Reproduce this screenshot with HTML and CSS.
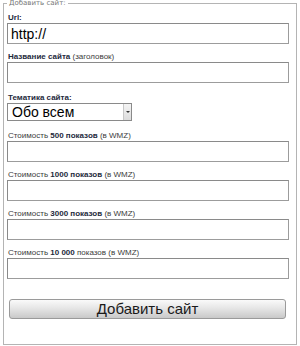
FILE: index.html
```html
<!DOCTYPE html>
<html lang="ru">
<head>
    <meta charset="UTF-8">
    <title>Добавить сайт</title>
    <link rel="stylesheet" href="styles.css">
</head>
<body>
    <form class="add-site">
        <fieldset>
            <legend>Добавить сайт:</legend>

            <div class="field">
                <label for="url"><b>Url:</b></label>
                <input type="text" id="url" value="http://">
            </div>

            <div class="field">
                <label for="title"><b>Название сайта</b> (заголовок)</label>
                <input type="text" id="title">
            </div>

            <div class="field field-select">
                <label for="topic"><b>Тематика сайта:</b></label>
                <div class="select" id="topic">
                    <span class="select-value">Обо всем</span>
                    <span class="select-arrow"></span>
                </div>
            </div>

            <div class="field">
                <label for="p500">Стоимость <b>500 показов</b> (в WMZ)</label>
                <input type="text" id="p500">
            </div>

            <div class="field">
                <label for="p1000">Стоимость <b>1000 показов</b> (в WMZ)</label>
                <input type="text" id="p1000">
            </div>

            <div class="field">
                <label for="p3000">Стоимость <b>3000 показов</b> (в WMZ)</label>
                <input type="text" id="p3000">
            </div>

            <div class="field">
                <label for="p10000">Стоимость <b>10 000</b> показов (в WMZ)</label>
                <input type="text" id="p10000">
            </div>

            <button type="button" class="submit">Добавить сайт</button>
        </fieldset>
    </form>
</body>
</html>
```

FILE: styles.css
```css
* {
    margin: 0;
    padding: 0;
    box-sizing: border-box;
}

body {
    background: #fff;
    font-family: "DejaVu Sans", Verdana, sans-serif;
    color: #333;
}

fieldset {
    margin: 0 3px 0 3px;
    height: 345px;
    border: 1px solid #b4b4b4;
    padding: 6px 7px 0 3px;
    display: flex;
    flex-direction: column;
    gap: 8px;
}

legend {
    padding: 0 2px;
    font-size: 7px;
    line-height: 7px;
    color: #777;
}

.field {
    display: flex;
    flex-direction: column;
}

.field-select {
    margin: 2px 0 2px;
}

label {
    font-family: "Liberation Sans", Arial, sans-serif;
    font-size: 8px;
    line-height: 10px;
    padding-left: 1px;
    color: #3c3c3c;
}

label b {
    color: #1e2a3c;
}

input {
    height: 21px;
    width: 100%;
    border: 1px solid #9c9c9c;
    border-top-color: #8a8a8a;
    border-left-color: #8a8a8a;
    padding: 0 3px;
    font-family: "Liberation Sans", Arial, sans-serif;
    font-size: 14px;
    color: #000;
    background: #fff;
}

.select {
    display: flex;
    width: 125px;
    height: 18px;
    border: 1px solid #8a8a8a;
    background: #fff;
}

.select-value {
    flex: 1;
    padding-left: 4px;
    font-family: "Liberation Sans", Arial, sans-serif;
    font-size: 14px;
    line-height: 16px;
    color: #000;
}

.select-arrow {
    width: 8px;
    border-left: 1px solid #c8c8c8;
    background: linear-gradient(#f4f4f4, #dcdcdc);
    display: flex;
    align-items: center;
    justify-content: center;
}

.select-arrow::after {
    content: "";
    border-left: 2px solid transparent;
    border-right: 2px solid transparent;
    border-top: 2px solid #333;
}

.submit {
    margin: 12px 0 0 2px;
    width: 277px;
    height: 20px;
    border: 1px solid #9a9a9a;
    border-radius: 3px;
    background: linear-gradient(#fafafa, #e6e6e6 45%, #c9c9c9);
    font-family: "Liberation Sans", Arial, sans-serif;
    font-size: 15px;
    color: #1a1a1a;
    line-height: 18px;
}
```
